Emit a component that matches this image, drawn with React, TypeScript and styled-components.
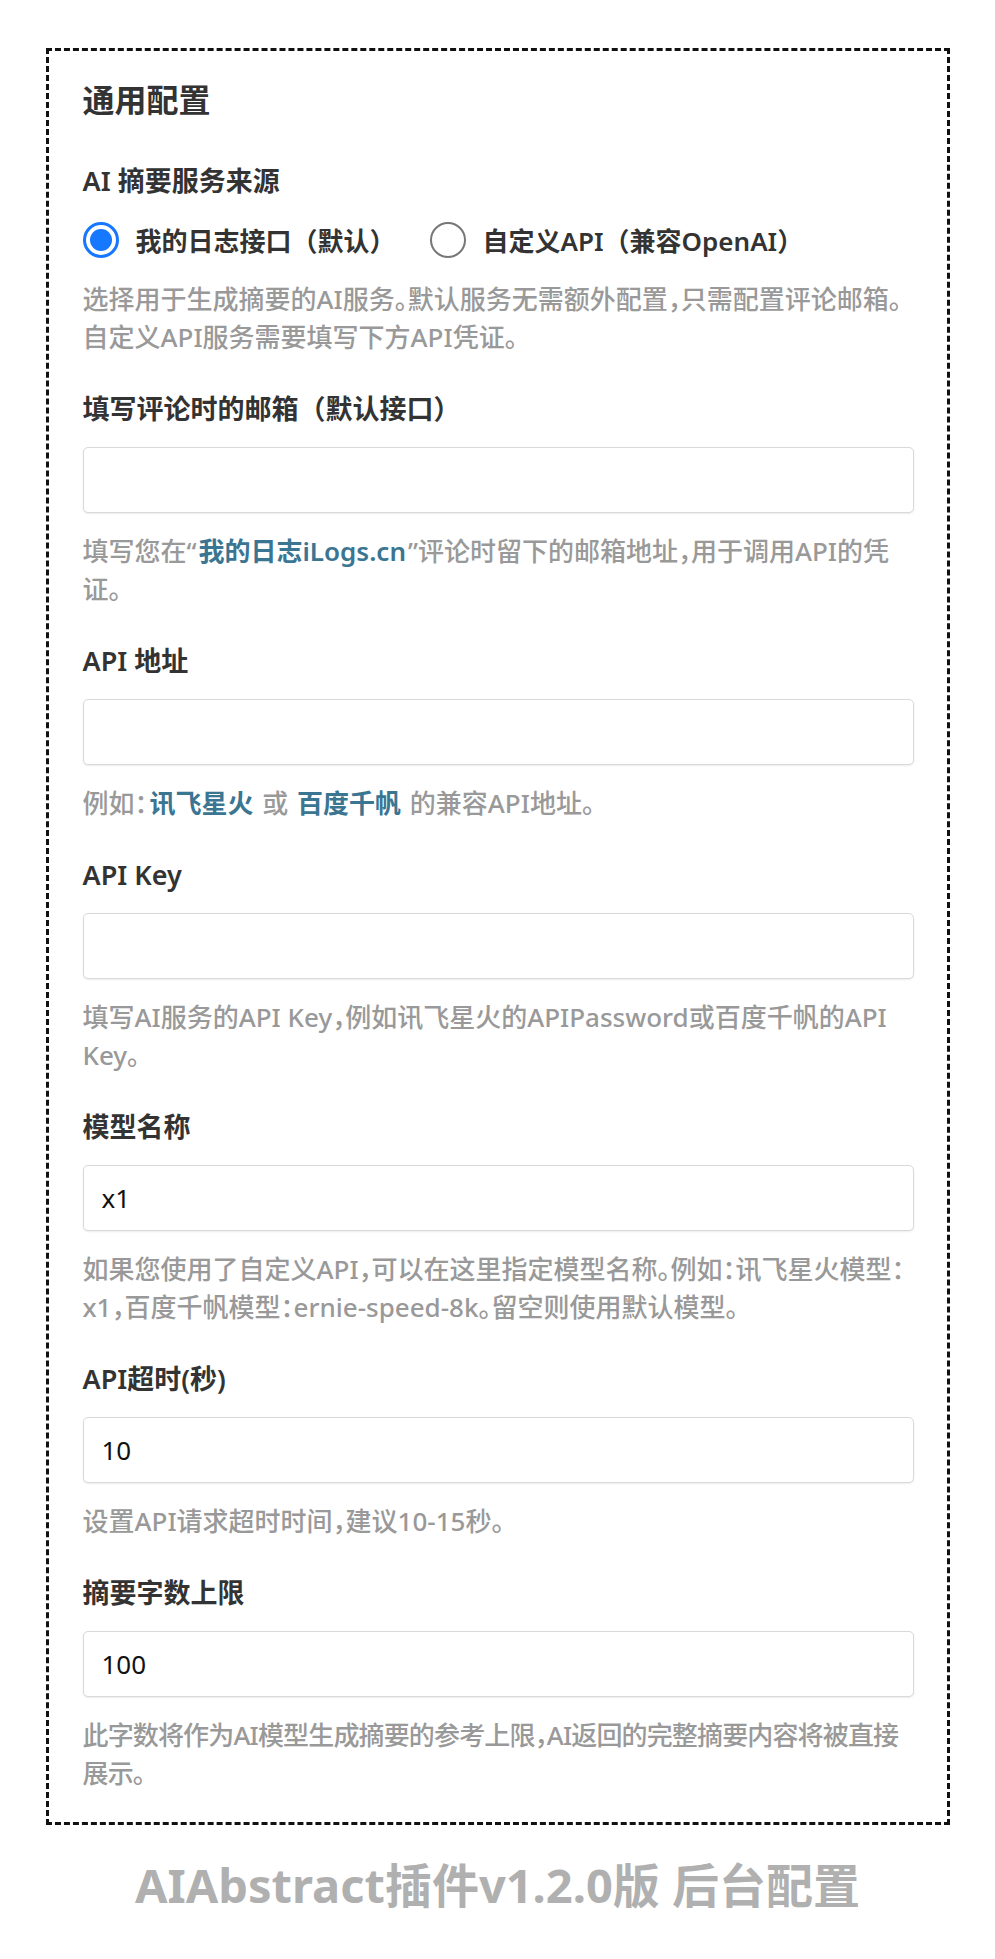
import React from "react";
import styled, { createGlobalStyle } from "styled-components";

const Global = createGlobalStyle`
  html, body {
    margin: 0;
    padding: 0;
    background: #ffffff;
  }
  body {
    font-family: "Noto Sans", "Noto Sans CJK SC", sans-serif;
    color: #333;
  }
`;

const Page = styled.div`
  padding-top: 48px;
  display: flex;
  flex-direction: column;
  align-items: center;
`;

const Panel = styled.section`
  box-sizing: border-box;
  width: 904px;
  border: 3px dashed #111;
  padding: 33px 33px 30px 34px;
  display: flex;
  flex-direction: column;
`;

const Title = styled.h2`
  margin: 0 0 47px;
  font-size: 32px;
  line-height: 32px;
  font-weight: 700;
  color: #333;
`;

const Field = styled.div`
  display: flex;
  flex-direction: column;
  & + & {
    margin-top: 35px;
  }
`;

const Label = styled.label`
  font-size: 27px;
  line-height: 36px;
  font-weight: 600;
  color: #333;
  margin-bottom: 20px;
`;

const RadioGroup = styled.div`
  display: flex;
  align-items: center;
  gap: 34px;
  height: 40px;
  margin-top: 1px;
`;

const RadioOption = styled.label`
  display: flex;
  align-items: center;
  gap: 17px;
  font-size: 26px;
  font-weight: 600;
  color: #333;
  cursor: pointer;
`;

const RadioDot = styled.span<{ $checked?: boolean }>`
  box-sizing: border-box;
  width: 36px;
  height: 36px;
  border-radius: 50%;
  border: ${(p) => (p.$checked ? "3px solid #1677ff" : "2px solid #777")};
  display: flex;
  align-items: center;
  justify-content: center;
  &::after {
    content: "";
    display: ${(p) => (p.$checked ? "block" : "none")};
    width: 22px;
    height: 22px;
    border-radius: 50%;
    background: #1677ff;
  }
`;

const TextInput = styled.input`
  box-sizing: border-box;
  width: 100%;
  height: 66px;
  padding: 0 18px;
  border: 1px solid #d9d9d9;
  border-radius: 5px;
  box-shadow: 0 1px 2px rgba(0, 0, 0, 0.08);
  font-family: "Noto Sans", "Noto Sans CJK SC", sans-serif;
  font-size: 26px;
  color: #111;
  background: #fff;
  outline: none;
`;

const Desc = styled.p<{ $tight?: boolean; $condensed?: boolean }>`
  margin: ${(p) => (p.$tight ? "20px" : "19px")} 0 0;
  font-size: 26px;
  line-height: 38px;
  color: #999;
  font-weight: 500;
  font-feature-settings: "halt";
  letter-spacing: ${(p) => (p.$condensed ? "-0.85px" : "0")};
`;

const Link = styled.a`
  color: #3a7592;
  text-decoration: none;
  font-weight: 600;
  margin: 0 2px;
`;

const Footer = styled.div`
  margin-top: 37px;
  font-size: 47px;
  line-height: 47px;
  font-weight: 700;
  color: #b0b0b0;
  text-align: center;
`;

type InputFieldProps = {
  label: string;
  value?: string;
  condensed?: boolean;
  children: React.ReactNode;
};

const InputField = ({ label, value, condensed, children }: InputFieldProps) => (
  <Field>
    <Label>{label}</Label>
    <TextInput defaultValue={value ?? ""} />
    <Desc $condensed={condensed}>{children}</Desc>
  </Field>
);

export default function App() {
  return (
    <>
      <Global />
      <Page>
        <Panel>
          <Title>通用配置</Title>
          <Field>
            <Label>AI 摘要服务来源</Label>
            <RadioGroup>
              <RadioOption>
                <RadioDot $checked />
                我的日志接口（默认）
              </RadioOption>
              <RadioOption>
                <RadioDot />
                自定义API（兼容OpenAI）
              </RadioOption>
            </RadioGroup>
            <Desc $tight>
              选择用于生成摘要的AI服务。默认服务无需额外配置，只需配置评论邮箱。自定义API服务需要填写下方API凭证。
            </Desc>
          </Field>
          <InputField label="填写评论时的邮箱（默认接口）">
            填写您在“<Link href="#">我的日志iLogs.cn</Link>”评论时留下的邮箱地址，用于调用API的凭证。
          </InputField>
          <InputField label="API 地址">
            例如：<Link href="#">讯飞星火</Link> 或 <Link href="#">百度千帆</Link> 的兼容API地址。
          </InputField>
          <InputField label="API Key">
            填写AI服务的API Key，例如讯飞星火的APIPassword或百度千帆的API Key。
          </InputField>
          <InputField label="模型名称" value="x1">
            如果您使用了自定义API，可以在这里指定模型名称。例如：讯飞星火模型：x1，百度千帆模型：ernie-speed-8k。留空则使用默认模型。
          </InputField>
          <InputField label="API超时(秒)" value="10">
            设置API请求超时时间，建议10-15秒。
          </InputField>
          <InputField label="摘要字数上限" value="100" condensed>
            此字数将作为AI模型生成摘要的参考上限，AI返回的完整摘要内容将被直接展示。
          </InputField>
        </Panel>
        <Footer>AIAbstract插件v1.2.0版 后台配置</Footer>
      </Page>
    </>
  );
}
